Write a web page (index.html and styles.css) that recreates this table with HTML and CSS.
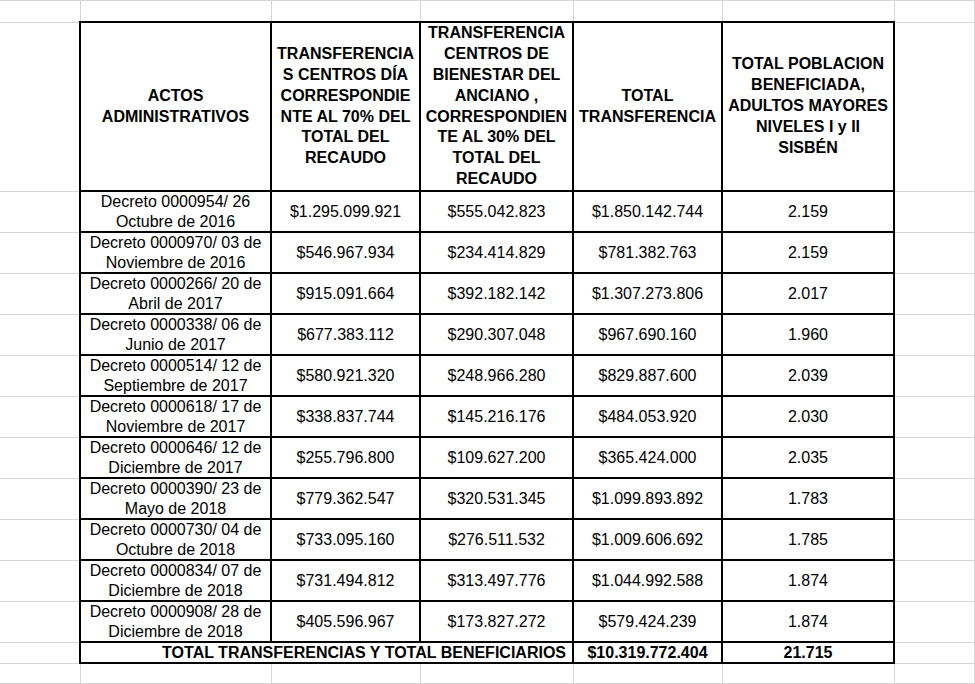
FILE: index.html
```html
<!DOCTYPE html>
<html lang="es">
<head>
<meta charset="utf-8">
<title>Transferencias</title>
<link rel="stylesheet" href="styles.css">
</head>
<body>
<table class="sheet">
  <colgroup>
    <col class="c-a"><col class="c-b"><col class="c-c"><col class="c-d"><col class="c-e"><col class="c-f"><col class="c-g"><col class="c-h">
  </colgroup>
  <tr class="r-top"><td></td><td></td><td></td><td></td><td></td><td></td><td></td><td></td></tr>
  <tr class="r-head">
    <td></td>
    <th class="t">ACTOS<br>ADMINISTRATIVOS</th>
    <th class="t">TRANSFERENCIA<br>S CENTROS DÍA<br>CORRESPONDIE<br>NTE AL 70% DEL<br>TOTAL DEL<br>RECAUDO</th>
    <th class="t">TRANSFERENCIA<br>CENTROS DE<br>BIENESTAR DEL<br>ANCIANO ,<br>CORRESPONDIEN<br>TE AL 30% DEL<br>TOTAL DEL<br>RECAUDO</th>
    <th class="t">TOTAL<br>TRANSFERENCIA</th>
    <th class="t">TOTAL POBLACION<br>BENEFICIADA,<br>ADULTOS MAYORES<br>NIVELES I y II<br>SISBÉN</th>
    <td></td><td></td>
  </tr>
  <tr class="r-data"><td></td><td class="t">Decreto 0000954/ 26<br>Octubre de 2016</td><td class="t">$1.295.099.921</td><td class="t">$555.042.823</td><td class="t">$1.850.142.744</td><td class="t">2.159</td><td></td><td></td></tr>
  <tr class="r-data"><td></td><td class="t">Decreto 0000970/ 03 de<br>Noviembre de 2016</td><td class="t">$546.967.934</td><td class="t">$234.414.829</td><td class="t">$781.382.763</td><td class="t">2.159</td><td></td><td></td></tr>
  <tr class="r-data"><td></td><td class="t">Decreto 0000266/ 20 de<br>Abril de 2017</td><td class="t">$915.091.664</td><td class="t">$392.182.142</td><td class="t">$1.307.273.806</td><td class="t">2.017</td><td></td><td></td></tr>
  <tr class="r-data"><td></td><td class="t">Decreto 0000338/ 06 de<br>Junio de 2017</td><td class="t">$677.383.112</td><td class="t">$290.307.048</td><td class="t">$967.690.160</td><td class="t">1.960</td><td></td><td></td></tr>
  <tr class="r-data"><td></td><td class="t">Decreto 0000514/ 12 de<br>Septiembre de 2017</td><td class="t">$580.921.320</td><td class="t">$248.966.280</td><td class="t">$829.887.600</td><td class="t">2.039</td><td></td><td></td></tr>
  <tr class="r-data"><td></td><td class="t">Decreto 0000618/ 17 de<br>Noviembre de 2017</td><td class="t">$338.837.744</td><td class="t">$145.216.176</td><td class="t">$484.053.920</td><td class="t">2.030</td><td></td><td></td></tr>
  <tr class="r-data"><td></td><td class="t">Decreto 0000646/ 12 de<br>Diciembre de 2017</td><td class="t">$255.796.800</td><td class="t">$109.627.200</td><td class="t">$365.424.000</td><td class="t">2.035</td><td></td><td></td></tr>
  <tr class="r-data"><td></td><td class="t">Decreto 0000390/ 23 de<br>Mayo de 2018</td><td class="t">$779.362.547</td><td class="t">$320.531.345</td><td class="t">$1.099.893.892</td><td class="t">1.783</td><td></td><td></td></tr>
  <tr class="r-data"><td></td><td class="t">Decreto 0000730/ 04 de<br>Octubre de 2018</td><td class="t">$733.095.160</td><td class="t">$276.511.532</td><td class="t">$1.009.606.692</td><td class="t">1.785</td><td></td><td></td></tr>
  <tr class="r-data"><td></td><td class="t">Decreto 0000834/ 07 de<br>Diciembre de 2018</td><td class="t">$731.494.812</td><td class="t">$313.497.776</td><td class="t">$1.044.992.588</td><td class="t">1.874</td><td></td><td></td></tr>
  <tr class="r-data"><td></td><td class="t">Decreto 0000908/ 28 de<br>Diciembre de 2018</td><td class="t">$405.596.967</td><td class="t">$173.827.272</td><td class="t">$579.424.239</td><td class="t">1.874</td><td></td><td></td></tr>
  <tr class="r-total"><td></td><td class="t total-label" colspan="3">TOTAL TRANSFERENCIAS Y TOTAL BENEFICIARIOS</td><td class="t bold">$10.319.772.404</td><td class="t bold">21.715</td><td></td><td></td></tr>
  <tr class="r-blank"><td></td><td></td><td></td><td></td><td></td><td></td><td></td><td></td></tr>
</table>
</body>
</html>
```

FILE: styles.css
```css
html, body {
  margin: 0;
  padding: 0;
  background: #ffffff;
}
body {
  width: 975px;
  height: 684px;
  overflow: hidden;
  font-family: "Liberation Sans", Arial, sans-serif;
  font-size: 16px;
  color: #000;
}
.sheet {
  border-collapse: collapse;
  table-layout: fixed;
  width: 975px;
}
.c-a { width: 80px; }
.c-b { width: 191px; }
.c-c { width: 149px; }
.c-d { width: 153px; }
.c-e { width: 149px; }
.c-f { width: 172px; }
.c-g { width: 80px; }
.c-h { width: 1px; }
.sheet td, .sheet th {
  border: 1px solid #d6d6d6;
  padding: 0;
  text-align: center;
  vertical-align: middle;
  white-space: nowrap;
  font-weight: normal;
}
.sheet td:first-child { border-left: none; }
.r-top td { height: 20px; border-top: 1px solid #d6d6d6; }
.r-head th { font-weight: bold; line-height: 20.875px; height: 167px; }
.r-head td { height: 167px; }
.r-data td { height: 39px; line-height: 19.5px; }
.r-total td { height: 19px; line-height: 19px; }
.r-blank td { height: 19px; }
.sheet .t {
  border: 2px solid #000;
}
.sheet .bold { font-weight: bold; }
.sheet .total-label {
  font-weight: bold;
  text-align: right;
  padding-right: 6px;
}
```
